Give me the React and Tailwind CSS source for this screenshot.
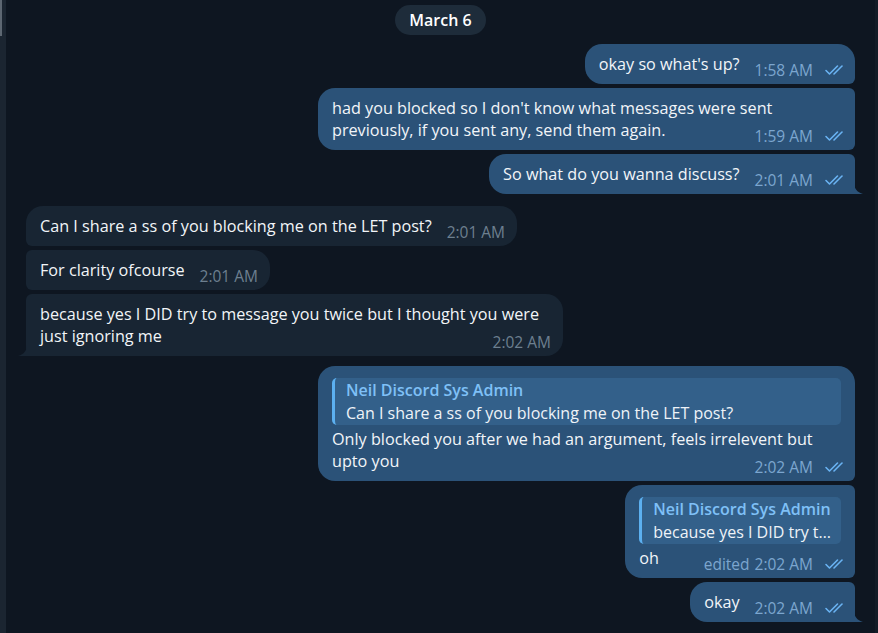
import React from "react"

const Check = () => (
  <svg width="22" height="12" viewBox="0 0 22 12" fill="none" stroke="#6ab3f3" strokeWidth="1.6" strokeLinecap="round" strokeLinejoin="round" className="ml-[11px]">
    <path d="M2 6.5L5.5 10L13.5 2" />
    <path d="M10 10L18 2" />
  </svg>
)

const Tail = ({ out }) =>
  out ? (
    <svg width="9" height="11" viewBox="0 0 9 11" className="absolute bottom-0 -right-[8px]">
      <path d="M0 0C0 5 3 9.5 9 11H0Z" fill="#2b5278" />
    </svg>
  ) : (
    <svg width="9" height="11" viewBox="0 0 9 11" className="absolute bottom-0 -left-[8px]">
      <path d="M9 0C9 5 6 9.5 0 11H9Z" fill="#182533" />
    </svg>
  )

const Time = ({ out, time, edited }) => (
  <span className={"float-right relative top-[6px] ml-[15px] flex items-center h-[22px] text-[15.5px] " + (out ? "text-[#7ca6cf]" : "text-[#6d7f8f]")}>
    {edited && <span className="mr-[5px]">edited</span>}
    {time}
    {out && <Check />}
  </span>
)

const Quote = ({ name, text }) => (
  <div className="mt-[4px] mb-[3px] mr-[5px] rounded-[5px] bg-[#33608a] border-l-[3px] border-[#5cb0f0] pl-[11px] pr-[10px] pt-[1px] text-[16px] leading-[23px] whitespace-nowrap">
    <div className="font-semibold text-[#7fc0f7]">{name}</div>
    <div className="text-[#eef3f8]">{text}</div>
  </div>
)

const radius = {
  outFirst: "rounded-[17px] rounded-br-[6px]",
  outMid: "rounded-[17px] rounded-r-[6px]",
  outLast: "rounded-[17px] rounded-tr-[6px] rounded-br-none",
  inFirst: "rounded-[17px] rounded-bl-[6px]",
  inMid: "rounded-[17px] rounded-l-[6px]",
  inLast: "rounded-[17px] rounded-tl-[6px] rounded-bl-none",
}

const Bubble = ({ out, pos, time, edited, quote, children }) => (
  <div className={"relative max-w-[537px] text-[16.2px] leading-[22px] text-[#f2f5f8] " + radius[pos] + (out ? " self-end bg-[#2b5278] pl-[14px] pr-[9px]" : " self-start bg-[#182533] pl-[14px] pr-[12px]") + (quote ? " pt-[8px] pb-[9px]" : " pt-[9px] pb-[9px]")}>
    {quote && <Quote name={quote.name} text={quote.text} />}
    <div>
      {children}
      <Time out={out} time={time} edited={edited} />
    </div>
    {(pos === "outLast" || pos === "inLast") && <Tail out={out} />}
  </div>
)

export default function App() {
  return (
    <div className="w-[878px] h-[633px] overflow-hidden flex bg-[#0e1621]" style={{ fontFamily: "'Open Sans', 'Noto Sans', sans-serif" }}>
      <div className="w-[6px] bg-[#1b2531] flex flex-col">
        <div className="w-[2px] h-[36px] bg-[#5d6772]" />
      </div>
      <div className="flex-1 flex flex-col px-[20px] pt-[5px]">
        <div className="self-center h-[30px] px-[14px] rounded-full bg-[#1e2c3a] text-white text-[16px] font-semibold flex items-center">March 6</div>

        <div className="flex flex-col gap-[4px] mt-[9px]">
          <Bubble out pos="outFirst" time="1:58 AM">okay so what's up?</Bubble>
          <Bubble out pos="outMid" time="1:59 AM">had you blocked so I don't know what messages were sent previously, if you sent any, send them again.</Bubble>
          <Bubble out pos="outLast" time="2:01 AM">So what do you wanna discuss?</Bubble>
        </div>

        <div className="flex flex-col gap-[4px] mt-[12px]">
          <Bubble pos="inFirst" time="2:01 AM">Can I share a ss of you blocking me on the LET post?</Bubble>
          <Bubble pos="inMid" time="2:01 AM">For clarity ofcourse</Bubble>
          <Bubble pos="inLast" time="2:02 AM">because yes I DID try to message you twice but I thought you were just ignoring me</Bubble>
        </div>

        <div className="flex flex-col gap-[4px] mt-[10px]">
          <Bubble out pos="outFirst" time="2:02 AM" quote={{ name: "Neil Discord Sys Admin", text: "Can I share a ss of you blocking me on the LET post?" }}>
            Only blocked you after we had an argument, feels irrelevent but upto you
          </Bubble>
          <Bubble out pos="outMid" time="2:02 AM" edited quote={{ name: "Neil Discord Sys Admin", text: "because yes I DID try t…" }}>
            oh
          </Bubble>
          <Bubble out pos="outLast" time="2:02 AM">okay</Bubble>
        </div>
      </div>
      <div className="w-[3px] bg-[#131c27]" />
    </div>
  )
}
